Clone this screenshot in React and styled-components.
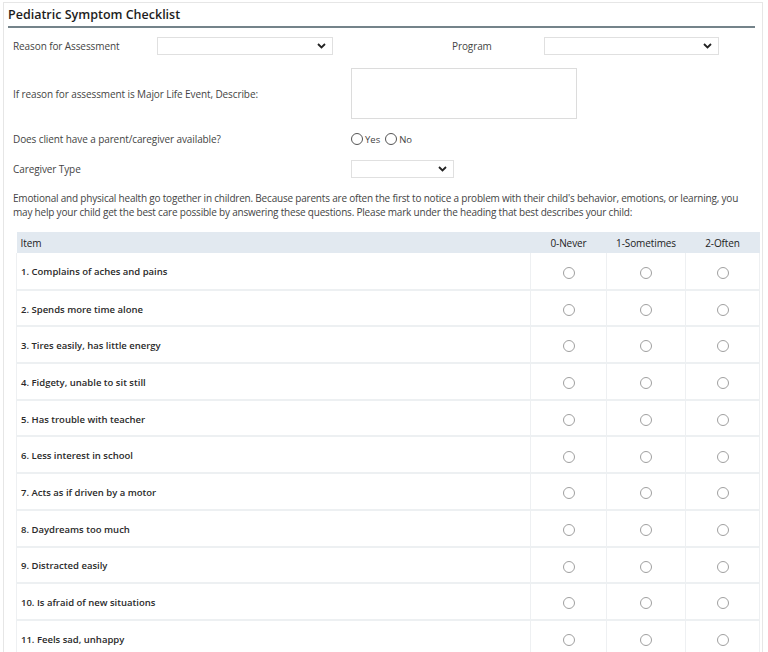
import React, { useState } from 'react'
import styled, { createGlobalStyle } from 'styled-components'

const items = [
  '1. Complains of aches and pains',
  '2. Spends more time alone',
  '3. Tires easily, has little energy',
  '4. Fidgety, unable to sit still',
  '5. Has trouble with teacher',
  '6. Less interest in school',
  '7. Acts as if driven by a motor',
  '8. Daydreams too much',
  '9. Distracted easily',
  '10. Is afraid of new situations',
  '11. Feels sad, unhappy',
]

const choices = ['0-Never', '1-Sometimes', '2-Often']

const Chevron = () => (
  <svg width="9" height="6" viewBox="0 0 9 6">
    <path d="M1 1l3.5 3.5L8 1" fill="none" stroke="#222" strokeWidth="1.8" />
  </svg>
)

const Select = ({ width }) => (
  <SelectBox $width={width}>
    <Chevron />
  </SelectBox>
)

const App = () => {
  const [answers, setAnswers] = useState({})
  const [caregiver, setCaregiver] = useState(null)

  return (
    <>
      <GlobalStyle />
      <Frame>
        <Title>Pediatric Symptom Checklist</Title>

        <FormRow $mt={9}>
          <Label $width={144}>Reason for Assessment</Label>
          <Select width={176} />
          <Spacer $width={119} />
          <Label $width={92}>Program</Label>
          <Select width={175} />
        </FormRow>

        <FormRow $mt={13}>
          <Label $width={338}>If reason for assessment is Major Life Event, Describe:</Label>
          <TextArea />
        </FormRow>

        <FormRow $mt={13}>
          <Label $width={338}>Does client have a parent/caregiver available?</Label>
          <RadioGroup>
            <RadioOption onClick={() => setCaregiver('yes')}>
              <FormRadio $on={caregiver === 'yes'} />
              Yes
            </RadioOption>
            <RadioOption onClick={() => setCaregiver('no')}>
              <FormRadio $on={caregiver === 'no'} />
              No
            </RadioOption>
          </RadioGroup>
        </FormRow>

        <FormRow $mt={14}>
          <Label $width={338}>Caregiver Type</Label>
          <Select width={103} />
        </FormRow>

        <Intro>
          Emotional and physical health go together in children. Because parents are often the first to
          notice a problem with their child's behavior, emotions, or learning, you may help your child get
          the best care possible by answering these questions. Please mark under the heading that best
          describes your child:
        </Intro>

        <Table>
          <colgroup>
            <col style={{ width: 514 }} />
            <col style={{ width: 76 }} />
            <col style={{ width: 79 }} />
            <col style={{ width: 74 }} />
          </colgroup>
          <thead>
            <tr>
              <HeadCell>Item</HeadCell>
              {choices.map((c) => (
                <HeadCell key={c} $center>{c}</HeadCell>
              ))}
            </tr>
          </thead>
          <tbody>
            {items.map((item, i) => (
              <Row key={item}>
                <ItemCell>{item}</ItemCell>
                {choices.map((c, j) => (
                  <ChoiceCell key={c} onClick={() => setAnswers({ ...answers, [i]: j })}>
                    <TableRadio $on={answers[i] === j} />
                  </ChoiceCell>
                ))}
              </Row>
            ))}
          </tbody>
        </Table>
      </Frame>
    </>
  )
}

const GlobalStyle = createGlobalStyle`
  html, body {
    margin: 0;
    background: #fff;
    font-family: "Open Sans", "Noto Sans", Arial, sans-serif;
    color: #333;
  }
`

const Frame = styled.div`
  margin: 2px 0 0 3px;
  width: 760px;
  box-sizing: border-box;
  border: 1px solid #e6e6e6;
  border-bottom: none;
  padding: 0 4px;
  height: 650px;
  overflow: hidden;
`

const Title = styled.h2`
  margin: 0 3px 0 0;
  padding: 3px 0 3px 0;
  font-size: 12.5px;
  font-weight: 600;
  color: #1d1d1d;
  border-bottom: 2px solid #74838a;
`

const FormRow = styled.div`
  display: flex;
  align-items: center;
  margin-top: ${(p) => p.$mt}px;
  padding-left: 5px;
`

const Spacer = styled.div`
  width: ${(p) => p.$width}px;
  flex-shrink: 0;
`

const Label = styled.div`
  width: ${(p) => p.$width}px;
  flex-shrink: 0;
  font-size: 10px;
  letter-spacing: -0.1px;
  color: #444;
`

const SelectBox = styled.div`
  width: ${(p) => p.$width}px;
  height: 18px;
  box-sizing: border-box;
  border: 1px solid #e0e0e0;
  background: #fff;
  display: flex;
  align-items: center;
  justify-content: flex-end;
  padding-right: 6px;
`

const TextArea = styled.div`
  width: 226px;
  height: 51px;
  box-sizing: border-box;
  border: 1px solid #dcdcdc;
  background: #fff;
`

const RadioGroup = styled.div`
  display: flex;
  align-items: center;
  gap: 5px;
`

const RadioOption = styled.label`
  display: flex;
  align-items: flex-end;
  gap: 2px;
  font-size: 9.5px;
  color: #444;
  cursor: pointer;
`

const FormRadio = styled.span`
  width: 12px;
  height: 12px;
  box-sizing: border-box;
  border-radius: 50%;
  border: 1px solid #555;
  background: ${(p) => (p.$on ? '#555' : '#fff')};
  box-shadow: inset 0 0 0 2px #fff;
  margin-bottom: 1px;
`

const Intro = styled.p`
  margin: 13px 0 0 0;
  padding: 0 12px 0 5px;
  font-size: 10px;
  letter-spacing: -0.2px;
  line-height: 14px;
  color: #444;
`

const Table = styled.table`
  margin: 13px 0 0 8px;
  width: 743px;
  border-collapse: collapse;
  table-layout: fixed;
`

const HeadCell = styled.th`
  height: 21px;
  padding: 0 4px;
  background: #e2e9f0;
  font-size: 10px;
  font-weight: 500;
  letter-spacing: -0.1px;
  color: #222;
  text-align: ${(p) => (p.$center ? 'center' : 'left')};
`

const Row = styled.tr`
  height: 36.7px;
  border-bottom: 2px solid #edf0f2;
`

const ItemCell = styled.td`
  padding: 2px 4px 0;
  font-size: 9.5px;
  font-weight: 600;
  color: #2a2a2a;
  border-left: 1px solid #eef0f2;
`

const ChoiceCell = styled.td`
  text-align: center;
  border-left: 1px solid #eef0f2;
  border-right: 1px solid #eef0f2;
  cursor: pointer;
`

const TableRadio = styled.span`
  display: inline-block;
  width: 12px;
  height: 12px;
  box-sizing: border-box;
  border-radius: 50%;
  border: 1px solid #a0a0a0;
  background: ${(p) => (p.$on ? '#777' : '#fff')};
  box-shadow: inset 0 0 0 2px #fff;
  vertical-align: middle;
`

export default App
